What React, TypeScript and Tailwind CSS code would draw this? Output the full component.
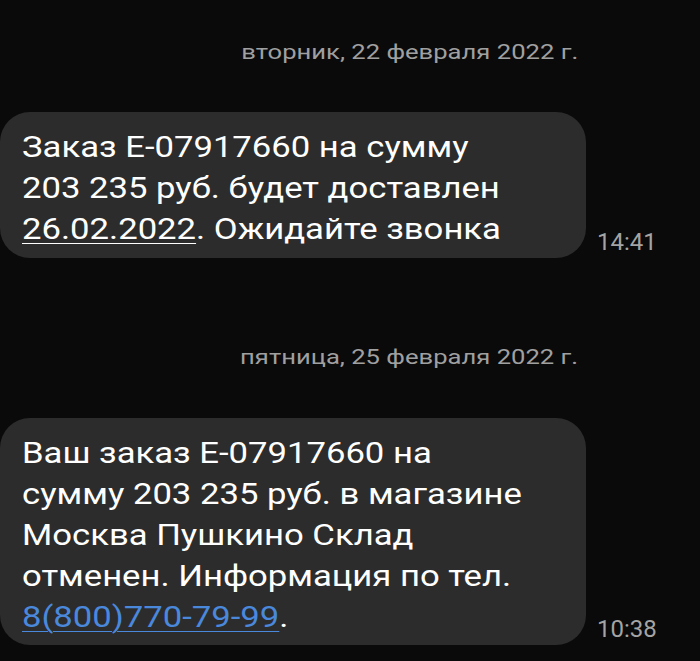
import React from "react";

function DateHeader({ text, className }: { text: string; className: string }) {
  return (
    <div className={`pr-[122px] text-right text-[20px] leading-[28px] text-[#a0a0a0] ${className}`}>
      <span className="inline-block origin-right scale-x-[1.28]">{text}</span>
    </div>
  );
}

export default function App() {
  return (
    <div
      className="w-[700px] h-[661px] bg-[#0a0a0a] overflow-hidden"
      style={{ fontFamily: "Roboto, 'Noto Sans', sans-serif" }}
    >
      <DateHeader text="вторник, 22 февраля 2022 г." className="pt-[38px]" />

      <div className="mt-[46px] flex items-end">
        <div className="w-[586px] shrink-0 rounded-[30px] bg-[#2c2c2c] pl-[22px] pt-[14px] pb-[9px] text-[30px] leading-[41px] text-white">
          <div className="origin-left scale-x-[1.155]">
            <div>Заказ Е-07917660 на сумму</div>
            <div>203 235 руб. будет доставлен</div>
            <div>
              <span className="underline decoration-1 underline-offset-[4px]">26.02.2022</span>. Ожидайте звонка
            </div>
          </div>
        </div>
        <div className="ml-[11px] mb-[2px] text-[24px] leading-[28px] text-[#a4a4a4]">14:41</div>
      </div>

      <DateHeader text="пятница, 25 февраля 2022 г." className="mt-[85px]" />

      <div className="mt-[47px] flex items-end">
        <div className="w-[586px] shrink-0 rounded-[30px] bg-[#2c2c2c] pl-[22px] pt-[14px] pb-[8px] text-[30px] leading-[41px] text-white">
          <div className="origin-left scale-x-[1.155]">
            <div>Ваш заказ Е-07917660 на</div>
            <div>сумму 203 235 руб. в магазине</div>
            <div>Москва Пушкино Склад</div>
            <div>отменен. Информация по тел.</div>
            <div>
              <span className="text-[#4a88dc] underline decoration-1 underline-offset-[4px]">8(800)770-79-99</span>.
            </div>
          </div>
        </div>
        <div className="ml-[11px] mb-[2px] text-[24px] leading-[28px] text-[#a4a4a4]">10:38</div>
      </div>
    </div>
  );
}
